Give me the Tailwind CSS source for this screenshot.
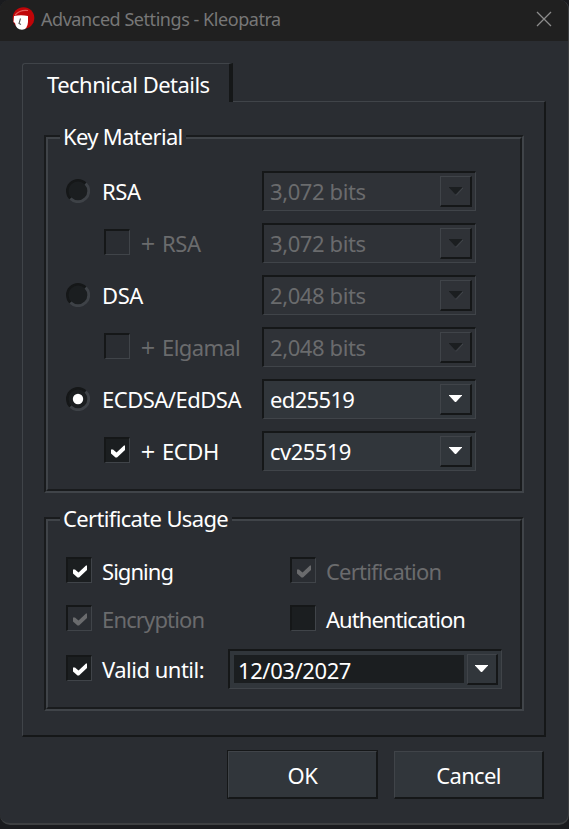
<!DOCTYPE html>
<html lang="en">
<head>
<meta charset="utf-8">
<title>Advanced Settings - Kleopatra</title>
<script src="https://cdn.jsdelivr.net/npm/@tailwindcss/browser@4"></script>
</head>
<body class="h-[829px] w-[569px] overflow-hidden bg-[#1a1b1e] font-['Noto_Sans',sans-serif] text-[22px] leading-[30px] tracking-[-0.4px] text-white">
<svg class="hidden">
  <symbol id="check" viewBox="0 0 14 13"><path d="M0 4.500V8.500L4.500 12.500H6L14 5V0.500H13L5.500 7.500L2 4.500Z" fill="currentColor"/></symbol>
  <symbol id="arrow" viewBox="0 0 13 7"><path d="M0 0H13V.6L7 7H6L0 .6Z" fill="currentColor"/></symbol>
  <symbol id="arrow-off" viewBox="0 0 15 9"><path d="M7 8.500L14 1" stroke="#42464b" fill="none"/><path d="M0 0H13V.6L7 7H6L0 .6Z" fill="#1b1e20"/></symbol>
  <symbol id="radio" viewBox="0 0 24 24"><circle cx="12" cy="12" r="11" fill="#1b1e20"/><path d="M4.400 19.600A10.700 10.700 0 0 1 19.600 4.400" stroke="#151718" stroke-width="2.500" fill="none"/><path d="M19.600 4.400A10.700 10.700 0 0 1 4.400 19.600" stroke="#3e4247" stroke-width="2.800" fill="none"/></symbol>
</svg>
<div class="flex h-[825px] w-[569px] flex-col overflow-hidden rounded-t-[9px] rounded-b-[10px] border-r border-b-2 border-[#3e4042] bg-[#2a2d32]">
  <header class="flex h-[41px] shrink-0 items-center bg-[#202020] pl-[11px] pr-[16px]">
    <svg class="mt-[-3px] size-[24px]" viewBox="0 0 24 24"><circle cx="12.500" cy="11" r="10.800" fill="#c00508"/><path d="M4 8Q9 2.500 17 3.500" stroke="#e25a58" fill="none" stroke-width="1.2"/><path d="M3 9Q10 7.500 17 9V15Q16.500 22.700 11 22.700Q5 22.700 4 16L2.500 15Z" fill="#fff"/><path d="M9.500 11.500L8 16.500L10 17.500" stroke="#555" stroke-width="1.100" fill="none"/></svg>
    <h1 class="mt-[-3px] ml-[6px] flex-1 whitespace-nowrap text-[18px] leading-[24px] tracking-[-0.45px] text-[#777]">Advanced Settings - Kleopatra</h1>
    <svg class="mt-[-4px] size-[16px]" viewBox="0 0 16 16"><path d="M1 1L15 15M15 1L1 15" stroke="#8c8c8c" stroke-width="1.3"/></svg>
  </header>
  <main class="flex flex-col pt-[22px] pl-[22px]">
    <div class="relative z-10 h-[39px] w-[211px] rounded-tl-[3px] border-t border-r-4 border-l border-t-[#404449] border-r-[#151718] border-l-[#404449] bg-[#2a2d32] pt-[5px] pl-[24px] tracking-[-0.52px] whitespace-nowrap">Technical Details</div>
    <section class="mt-[-1px] flex h-[636px] w-[524px] flex-col gap-[24px] border border-r-2 border-b-2 border-t-[#404449] border-r-[#151718] border-b-[#151718] border-l-[#404449] pt-[33px] pl-[21px]">
      <div class="h-[358px] w-[480px] shrink-0 border-2 border-t-[#191b1d] border-r-[#404449] border-b-[#404449] border-l-[#191b1d]">
        <div class="h-full border-2 border-t-[#404449] border-r-[#191b1d] border-b-[#191b1d] border-l-[#404449] pl-[12px]">
          <h2 class="mt-[-18px] flex h-[30px] w-[126px] bg-[#2a2d32] pl-[3px] tracking-[-0.7px] whitespace-nowrap">Key Material</h2>
          <div class="mt-[20px] ml-[6px] flex flex-col gap-[12px]">
            <div class="flex h-[40px] items-center"><svg class="size-[24px]"><use href="#radio"/></svg><span class="ml-[12px] w-[160px] pb-px">RSA</span>
              <div class="flex h-[40px] w-[214px] items-start border-t-2 border-l-2 border-r border-b border-t-[#151718] border-l-[#151718] border-r-[#404449] border-b-[#404449] bg-[#2f3237] pl-[6px] text-[#6a6b6d]"><span class="w-[170px] pt-[3px]">3,072 bits</span><div class="mt-[3px] flex h-[31px] w-[32px] items-center border border-r-2 border-b-2 border-t-[#404449] border-l-[#404449] border-r-[#151718] border-b-[#151718] pl-[8px]"><svg class="h-[9px] w-[15px]"><use href="#arrow-off"/></svg></div></div></div>
            <div class="flex h-[40px] items-center pl-[38px]"><div class="mt-[-2px] size-[26px] border-2 border-r border-b border-t-[#151718] border-l-[#151718] border-r-[#404449] border-b-[#404449]"></div><span class="ml-[10px] flex w-[122px] pb-px whitespace-nowrap text-[#6a6b6d]"><span class="w-[22px] font-['DejaVu_Sans'] text-[19px]">+</span><span>RSA</span></span>
              <div class="flex h-[40px] w-[214px] items-start border-t-2 border-l-2 border-r border-b border-t-[#151718] border-l-[#151718] border-r-[#404449] border-b-[#404449] bg-[#2f3237] pl-[6px] text-[#6a6b6d]"><span class="w-[170px] pt-[3px]">3,072 bits</span><div class="mt-[3px] flex h-[31px] w-[32px] items-center border border-r-2 border-b-2 border-t-[#404449] border-l-[#404449] border-r-[#151718] border-b-[#151718] pl-[8px]"><svg class="h-[9px] w-[15px]"><use href="#arrow-off"/></svg></div></div></div>
            <div class="flex h-[40px] items-center"><svg class="size-[24px]"><use href="#radio"/></svg><span class="ml-[12px] w-[160px] pb-px">DSA</span>
              <div class="flex h-[40px] w-[214px] items-start border-t-2 border-l-2 border-r border-b border-t-[#151718] border-l-[#151718] border-r-[#404449] border-b-[#404449] bg-[#2f3237] pl-[6px] text-[#6a6b6d]"><span class="w-[170px] pt-[3px]">2,048 bits</span><div class="mt-[3px] flex h-[31px] w-[32px] items-center border border-r-2 border-b-2 border-t-[#404449] border-l-[#404449] border-r-[#151718] border-b-[#151718] pl-[8px]"><svg class="h-[9px] w-[15px]"><use href="#arrow-off"/></svg></div></div></div>
            <div class="flex h-[40px] items-center pl-[38px]"><div class="mt-[-2px] size-[26px] border-2 border-r border-b border-t-[#151718] border-l-[#151718] border-r-[#404449] border-b-[#404449]"></div><span class="ml-[10px] flex w-[122px] pb-px whitespace-nowrap text-[#6a6b6d]"><span class="w-[22px] font-['DejaVu_Sans'] text-[19px]">+</span><span class="tracking-[-0.6px]">Elgamal</span></span>
              <div class="flex h-[40px] w-[214px] items-start border-t-2 border-l-2 border-r border-b border-t-[#151718] border-l-[#151718] border-r-[#404449] border-b-[#404449] bg-[#2f3237] pl-[6px] text-[#6a6b6d]"><span class="w-[170px] pt-[3px]">2,048 bits</span><div class="mt-[3px] flex h-[31px] w-[32px] items-center border border-r-2 border-b-2 border-t-[#404449] border-l-[#404449] border-r-[#151718] border-b-[#151718] pl-[8px]"><svg class="h-[9px] w-[15px]"><use href="#arrow-off"/></svg></div></div></div>
            <div class="flex h-[40px] items-center"><svg class="size-[24px]"><use href="#radio"/><circle cx="12" cy="12" r="5.200" fill="#fff"/></svg><span class="ml-[12px] w-[160px] pb-px tracking-[-0.5px] whitespace-nowrap">ECDSA/EdDSA</span>
              <div class="flex h-[40px] w-[214px] items-start border-t-2 border-l-2 border-r border-b border-t-[#151718] border-l-[#151718] border-r-[#404449] border-b-[#404449] bg-[#31363b] pl-[6px]"><span class="w-[170px] pt-[3px] tracking-[-0.65px]">ed25519</span><div class="mt-[3px] flex h-[31px] w-[32px] items-center border border-r-2 border-b-2 border-t-[#404449] border-l-[#404449] border-r-[#151718] border-b-[#151718] pl-[8px]"><svg class="mt-[-1px] h-[7px] w-[13px]"><use href="#arrow"/></svg></div></div></div>
            <div class="flex h-[40px] items-center pl-[38px]"><div class="mt-[-2px] flex size-[26px] border-2 border-r border-b border-t-[#151718] border-l-[#151718] border-r-[#404449] border-b-[#404449] bg-[#1b1e20] pt-[6px] pl-[5px]"><svg class="h-[13px] w-[14px]"><use href="#check"/></svg></div><span class="ml-[10px] flex w-[122px] pb-px whitespace-nowrap"><span class="w-[22px] font-['DejaVu_Sans'] text-[19px]">+</span><span>ECDH</span></span>
              <div class="flex h-[40px] w-[214px] items-start border-t-2 border-l-2 border-r border-b border-t-[#151718] border-l-[#151718] border-r-[#404449] border-b-[#404449] bg-[#31363b] pl-[6px]"><span class="w-[170px] pt-[3px] tracking-[-0.55px]">cv25519</span><div class="mt-[3px] flex h-[31px] w-[32px] items-center border border-r-2 border-b-2 border-t-[#404449] border-l-[#404449] border-r-[#151718] border-b-[#151718] pl-[8px]"><svg class="mt-[-1px] h-[7px] w-[13px]"><use href="#arrow"/></svg></div></div></div>
          </div>
        </div>
      </div>
      <div class="h-[194px] w-[480px] shrink-0 border-2 border-t-[#191b1d] border-r-[#404449] border-b-[#404449] border-l-[#191b1d]">
        <div class="h-full border-2 border-t-[#404449] border-r-[#191b1d] border-b-[#191b1d] border-l-[#404449] pl-[12px]">
          <h2 class="mt-[-18px] flex h-[30px] w-[172px] bg-[#2a2d32] pl-[3px] tracking-[-0.65px] whitespace-nowrap">Certificate Usage</h2>
          <div class="mt-[24px] ml-[6px] grid grid-cols-[224px_1fr] gap-y-[22px]">
            <div class="flex h-[26px] items-center"><div class="size-[26px] border-2 border-r border-b border-t-[#151718] border-l-[#151718] border-r-[#404449] border-b-[#404449] bg-[#1b1e20] pt-[6px] pl-[5px]"><svg class="h-[13px] w-[14px]"><use href="#check"/></svg></div><span class="ml-[10px] pt-px tracking-[-0.95px]">Signing</span></div>
            <div class="flex h-[26px] items-center text-[#6a6b6d]"><div class="size-[26px] border-2 border-r border-b border-t-[#151718] border-l-[#151718] border-r-[#404449] border-b-[#404449] pt-[6px] pl-[5px]"><svg class="h-[13px] w-[14px]"><use href="#check"/></svg></div><span class="ml-[10px] pt-px tracking-[-0.8px]">Certification</span></div>
            <div class="flex h-[26px] items-center text-[#6a6b6d]"><div class="size-[26px] border-2 border-r border-b border-t-[#151718] border-l-[#151718] border-r-[#404449] border-b-[#404449] pt-[6px] pl-[5px]"><svg class="h-[13px] w-[14px]"><use href="#check"/></svg></div><span class="ml-[10px] pt-px tracking-[-0.85px]">Encryption</span></div>
            <div class="flex h-[26px] items-center"><div class="size-[26px] border-2 border-r border-b border-t-[#151718] border-l-[#151718] border-r-[#404449] border-b-[#404449] bg-[#1b1e20]"></div><span class="ml-[10px] pt-px tracking-[-0.95px]">Authentication</span></div>
          </div>
          <div class="mt-[18px] ml-[6px] flex h-[40px] items-center"><div class="mt-[-2px] size-[26px] border-2 border-r border-b border-t-[#151718] border-l-[#151718] border-r-[#404449] border-b-[#404449] bg-[#1b1e20] pt-[6px] pl-[5px]"><svg class="h-[13px] w-[14px]"><use href="#check"/></svg></div><span class="ml-[10px] w-[126px] pb-px tracking-[-0.5px] whitespace-nowrap">Valid until:</span>
            <div class="flex h-[40px] w-[274px] items-start border-t-2 border-l-2 border-r border-b border-t-[#151718] border-l-[#151718] border-r-[#404449] border-b-[#404449] bg-[#31363b] pt-[3px] pl-[4px]"><div class="mt-px mr-[3px] h-[28px] w-[230px] bg-[#1b1e20] pl-[4px]">12/03/2027</div><div class="flex h-[31px] w-[31px] items-center border border-r-2 border-b-2 border-t-[#404449] border-l-[#404449] border-r-[#151718] border-b-[#151718] pl-[7px]"><svg class="mt-[-1px] h-[7px] w-[13px]"><use href="#arrow"/></svg></div></div></div>
        </div>
      </div>
    </section>
    <footer class="mt-[13px] flex items-end gap-[16px] pl-[205px]">
      <div class="h-[49px] w-[151px] border border-[#151718]"><button class="flex h-full w-full items-center justify-center border border-t-[#404449] border-r-[#151718] border-b-[#151718] border-l-[#404449] bg-[#31363b]">OK</button></div>
      <button class="flex h-[48px] w-[150px] items-center justify-center border border-r-2 border-b-2 border-t-[#404449] border-r-[#151718] border-b-[#151718] border-l-[#404449] bg-[#31363b] tracking-[-0.7px]">Cancel</button>
    </footer>
  </main>
</div>
</body>
</html>
